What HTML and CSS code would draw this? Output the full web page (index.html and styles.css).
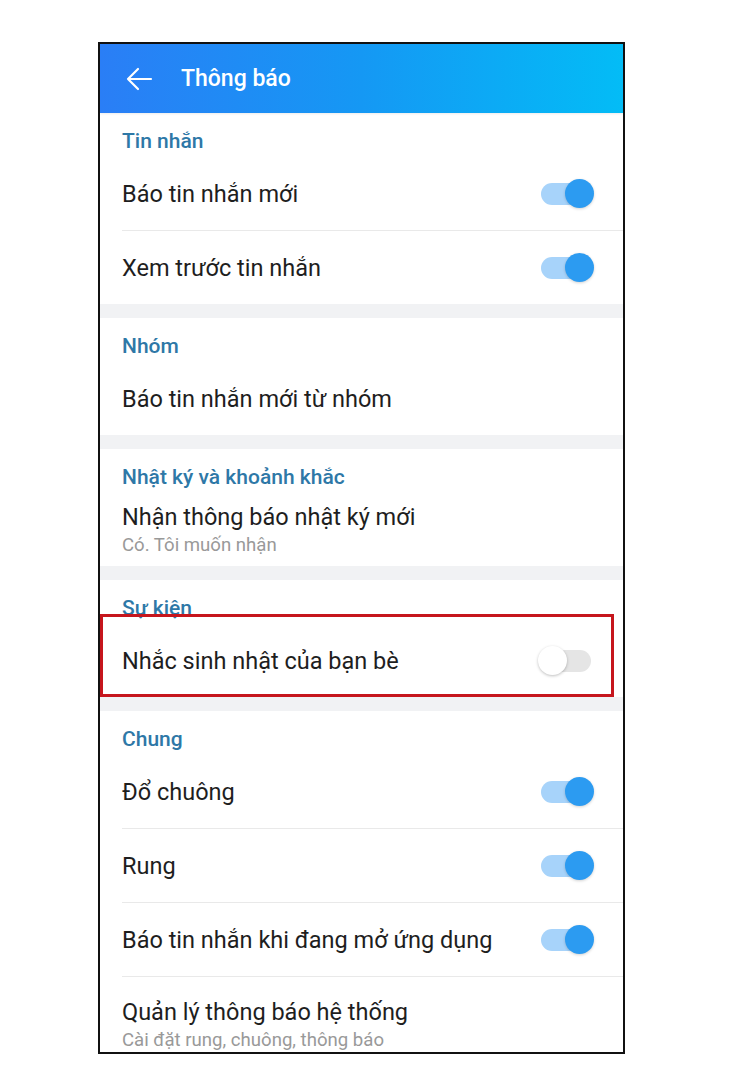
FILE: index.html
```html
<!DOCTYPE html>
<html lang="vi">
<head>
<meta charset="utf-8">
<link rel="stylesheet" href="styles.css">
</head>
<body>
<div class="phone">
  <header class="appbar">
    <svg class="back" width="28" height="24" viewBox="0 0 28 24"><path d="M26 12H3M13 2L3 12l10 10" fill="none" stroke="#fff" stroke-width="2.2" stroke-linecap="round" stroke-linejoin="round"/></svg>
    <h1 class="title">Thông báo</h1>
  </header>

  <section class="section">
    <div class="label">Tin nhắn</div>
    <div class="row"><span class="text">Báo tin nhắn mới</span><span class="toggle on"><i class="track"></i><i class="thumb"></i></span></div>
    <div class="row"><span class="text">Xem trước tin nhắn</span><span class="toggle on"><i class="track"></i><i class="thumb"></i></span></div>
  </section>
  <div class="band"></div>

  <section class="section">
    <div class="label">Nhóm</div>
    <div class="row"><span class="text">Báo tin nhắn mới từ nhóm</span></div>
  </section>
  <div class="band"></div>

  <section class="section">
    <div class="label">Nhật ký và khoảnh khắc</div>
    <div class="row"><div class="stack"><span class="text">Nhận thông báo nhật ký mới</span><span class="sub">Có. Tôi muốn nhận</span></div></div>
  </section>
  <div class="band"></div>

  <section class="section highlight-host">
    <div class="label">Sự kiện</div>
    <div class="row"><span class="text">Nhắc sinh nhật của bạn bè</span><span class="toggle off"><i class="track"></i><i class="thumb"></i></span></div>
    <div class="highlight"></div>
  </section>
  <div class="band"></div>

  <section class="section">
    <div class="label">Chung</div>
    <div class="row"><span class="text">Đổ chuông</span><span class="toggle on"><i class="track"></i><i class="thumb"></i></span></div>
    <div class="row"><span class="text">Rung</span><span class="toggle on"><i class="track"></i><i class="thumb"></i></span></div>
    <div class="row"><span class="text">Báo tin nhắn khi đang mở ứng dụng</span><span class="toggle on"><i class="track"></i><i class="thumb"></i></span></div>
    <div class="row tall"><div class="stack"><span class="text">Quản lý thông báo hệ thống</span><span class="sub">Cài đặt rung, chuông, thông báo</span></div></div>
  </section>
</div>
</body>
</html>
```

FILE: styles.css
```css
html, body {
  margin: 0;
  padding: 0;
  background: #fff;
}
body {
  font-family: Roboto, "Noto Sans", "Liberation Sans", sans-serif;
}
.phone {
  margin: 42px 0 0 98px;
  width: 523px;
  height: 1008px;
  border: 2px solid #111;
  overflow: hidden;
  background: #fff;
}
.appbar {
  height: 69px;
  display: flex;
  align-items: center;
  padding-left: 25px;
  background: linear-gradient(90deg, #2a7ef6 0%, #1598f4 50%, #03bcf6 100%);
  box-shadow: 0 1px 2px rgba(0,0,0,0.08);
  position: relative;
}
.back {
  display: block;
  margin-top: 1px;
}
.title {
  margin: 0 0 0 28px;
  color: #fff;
  font-size: 23px;
  font-weight: 500;
}
.section {
  background: #fff;
}
.band {
  height: 14px;
  background: #f1f2f4;
}
.label {
  height: 44px;
  box-sizing: border-box;
  padding: 16px 0 0 22px;
  line-height: 24px;
  font-size: 21px;
  font-weight: 500;
  color: #2e78a7;
}
.row {
  height: 73px;
  margin-left: 22px;
  padding-right: 29px;
  display: flex;
  align-items: center;
  justify-content: space-between;
}
.row + .row {
  border-top: 1px solid #e9e9e9;
}
.row.tall {
  height: 92px;
  align-items: flex-start;
  padding-top: 21px;
  box-sizing: border-box;
}
.text {
  font-size: 23.5px;
  color: #1e1e1e;
  line-height: 28px;
}
.stack {
  display: flex;
  flex-direction: column;
}
.sub {
  font-size: 18.6px;
  font-weight: 400;
  color: #999;
  line-height: 24px;
  margin-top: 2px;
}
.toggle {
  position: relative;
  width: 56px;
  height: 30px;
  flex: none;
}
.toggle .track {
  position: absolute;
  left: 3px;
  top: 4px;
  width: 50px;
  height: 22px;
  border-radius: 11px;
  background: #a7d3fa;
}
.toggle .thumb {
  position: absolute;
  top: 0;
  width: 29px;
  height: 29px;
  border-radius: 50%;
  background: #2c9bf1;
  box-shadow: 0 1px 3px rgba(0,0,0,0.18);
}
.toggle.on .thumb {
  right: 0;
}
.toggle.off .track {
  background: #e5e5e5;
}
.toggle.off .thumb {
  left: 0;
  background: #fff;
  box-shadow: 0 1px 3px rgba(0,0,0,0.25);
}
.highlight-host {
  position: relative;
}
.highlight {
  position: absolute;
  left: 0;
  top: 34px;
  width: 514px;
  height: 83px;
  box-sizing: border-box;
  border: 3px solid #c6161d;
  pointer-events: none;
}
```
